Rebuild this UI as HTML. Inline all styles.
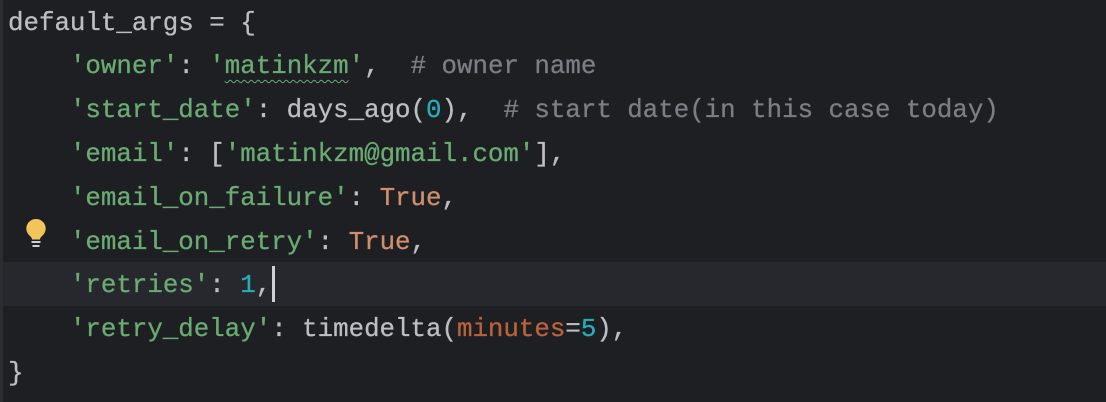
<!DOCTYPE html>
<html><head><style>
html,body{margin:0;padding:0;}
body{width:1106px;height:402px;background:#1e1f22;overflow:hidden;position:relative;font-family:"Liberation Mono",monospace;font-size:25.8px;color:#bcbec4;}
.cl{position:absolute;left:0;top:262px;width:1106px;height:44px;background:#26282e;}
.edge{position:absolute;left:0;top:0;width:3px;height:402px;background:#2b2d30;}
.ln{position:absolute;left:8px;height:44px;line-height:44px;white-space:pre;-webkit-text-stroke:0.3px currentColor;}
.s{color:#6aab73}.n{color:#2aacb8}.k{color:#cf8e6d}.c{color:#7a7e85}.p{color:#b9633a}
.w{text-decoration:underline wavy #6aab73;text-underline-offset:6px;text-decoration-thickness:1px;}
.cur{position:absolute;left:272px;top:266px;width:3px;height:36px;background:#ced0d6;}
</style></head><body>
<div class="cl"></div><div class="edge"></div>
<div class="ln" style="top:2px">default_args = {</div>
<div class="ln" style="top:45px">    <span class="s">'owner'</span>: <span class="s">'<span class="w">matinkzm</span>'</span>,  <span class="c"># owner name</span></div>
<div class="ln" style="top:89px">    <span class="s">'start_date'</span>: days_ago(<span class="n">0</span>),  <span class="c"># start date(in this case today)</span></div>
<div class="ln" style="top:133px">    <span class="s">'email'</span>: [<span class="s">'matinkzm@gmail.com'</span>],</div>
<div class="ln" style="top:177px">    <span class="s">'email_on_failure'</span>: <span class="k">True</span>,</div>
<div class="ln" style="top:221px">    <span class="s">'email_on_retry'</span>: <span class="k">True</span>,</div>
<div class="ln" style="top:264px">    <span class="s">'retries'</span>: <span class="n">1</span>,</div>
<div class="ln" style="top:308px">    <span class="s">'retry_delay'</span>: timedelta(<span class="p">minutes</span>=<span class="n">5</span>),</div>
<div class="ln" style="top:352px">}</div>
<div class="cur"></div>
<svg style="position:absolute;left:24px;top:218px" width="24" height="32" viewBox="0 0 24 32">
<path d="M12 1a9.5 9.5 0 0 0-6 17c1.3 1.2 2 2.2 2 3.5h8c0-1.3.7-2.3 2-3.5A9.5 9.5 0 0 0 12 1z" fill="#f2c55c"/>
<rect x="7.5" y="23" width="9" height="2" fill="#ced0d6"/>
<rect x="8.5" y="27" width="7" height="2" fill="#ced0d6"/>
</svg>
</body></html>
